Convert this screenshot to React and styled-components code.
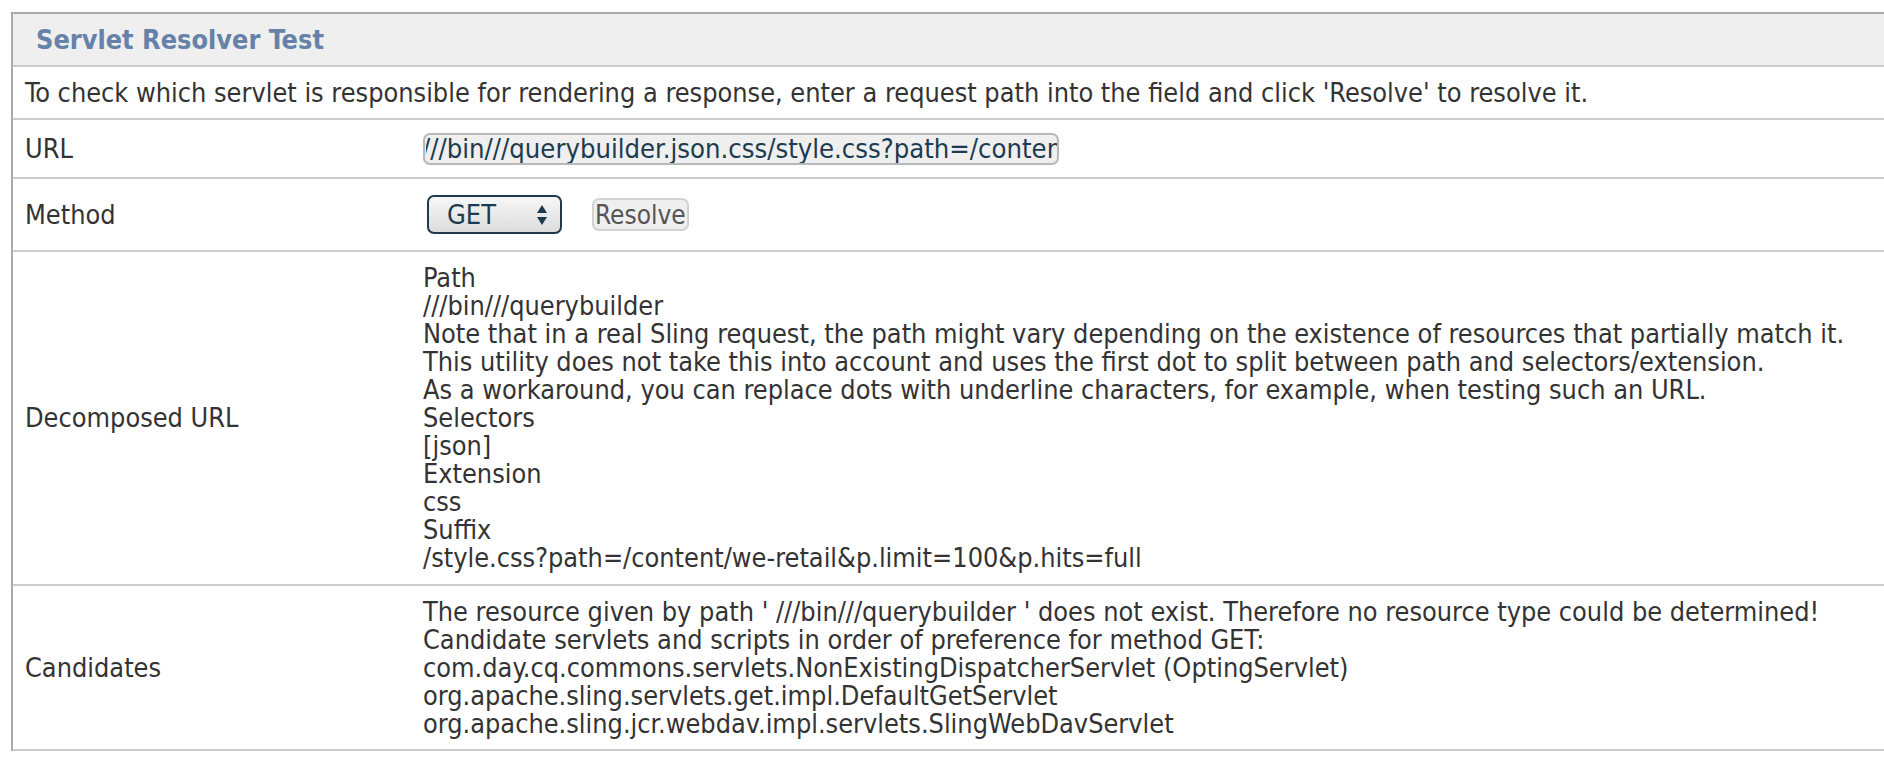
import React from 'react'
import styled, { createGlobalStyle } from 'styled-components'

const GlobalStyle = createGlobalStyle`
  html, body {
    margin: 0;
    padding: 0;
    background: #fff;
    overflow: hidden;
  }
  body {
    font-family: "DejaVu Sans Condensed", "DejaVu Sans", sans-serif;
    font-size: 26.85px;
    color: #333;
  }
`

const decomposed = [
  'Path',
  '///bin///querybuilder',
  'Note that in a real Sling request, the path might vary depending on the existence of resources that partially match it.',
  'This utility does not take this into account and uses the first dot to split between path and selectors/extension.',
  'As a workaround, you can replace dots with underline characters, for example, when testing such an URL.',
  'Selectors',
  '[json]',
  'Extension',
  'css',
  'Suffix',
  '/style.css?path=/content/we-retail&p.limit=100&p.hits=full',
]

const candidates = [
  "The resource given by path ' ///bin///querybuilder ' does not exist. Therefore no resource type could be determined!",
  'Candidate servlets and scripts in order of preference for method GET:',
  'com.day.cq.commons.servlets.NonExistingDispatcherServlet (OptingServlet)',
  'org.apache.sling.servlets.get.impl.DefaultGetServlet',
  'org.apache.sling.jcr.webdav.impl.servlets.SlingWebDavServlet',
]

function App() {
  return (
    <Page>
      <GlobalStyle />
      <Table>
        <Header>Servlet Resolver Test</Header>
        <Intro>
          To check which servlet is responsible for rendering a response, enter a request path into the field and click 'Resolve' to resolve it.
        </Intro>
        <Row>
          <Label>URL</Label>
          <Value $pad="12.5px">
            <UrlInput
              type="text"
              defaultValue="///bin///querybuilder.json.css/style.css?path=/content/we-retail&p.limit=100&p.hits=full"
            />
          </Value>
        </Row>
        <Row>
          <Label>Method</Label>
          <Value $pad="16px">
            <Controls>
              <SelectWrap>
                <MethodSelect defaultValue="GET">
                  <option>GET</option>
                  <option>POST</option>
                  <option>PUT</option>
                  <option>DELETE</option>
                </MethodSelect>
                <Arrows width="12" height="22" viewBox="0 0 12 22">
                  <path d="M6 1 L11 9 L1 9 Z" fill="#1f3a4d" />
                  <path d="M6 21 L11 13 L1 13 Z" fill="#1f3a4d" />
                </Arrows>
              </SelectWrap>
              <ResolveButton>Resolve</ResolveButton>
            </Controls>
          </Value>
        </Row>
        <Row>
          <Label>Decomposed URL</Label>
          <Value>
            {decomposed.map((line, i) => (
              <Line key={i}>{line}</Line>
            ))}
          </Value>
        </Row>
        <Row>
          <Label>Candidates</Label>
          <Value $pad="11.5px">
            {candidates.map((line, i) => (
              <Line key={i}>{line}</Line>
            ))}
          </Value>
        </Row>
      </Table>
    </Page>
  )
}

const Page = styled.div`
  padding: 12px 0 0 11px;
  width: 100vw;
  height: 100vh;
  box-sizing: border-box;
`

const Table = styled.div`
  border-top: 2px solid #aaa;
  border-left: 2px solid #aaa;
  width: 1900px;
`

const Header = styled.div`
  background: #efefef;
  border-bottom: 2px solid #ccc;
  height: 51px;
  display: flex;
  align-items: center;
  padding-left: 23px;
  font-weight: bold;
  color: #6682a8;
`

const Intro = styled.div`
  border-bottom: 2px solid #ccc;
  height: 51px;
  display: flex;
  align-items: center;
  padding-left: 12px;
  line-height: 28px;
`

const Row = styled.div`
  display: grid;
  grid-template-columns: 410px 1fr;
  align-items: center;
  border-bottom: 2px solid #ccc;
`

const Label = styled.div`
  padding-left: 12px;
  line-height: 28px;
`

const Value = styled.div`
  padding: ${(p) => p.$pad || '12px'} 0;
  line-height: 28px;
`

const Line = styled.div`
  white-space: nowrap;
`

const UrlInput = styled.input`
  display: block;
  box-sizing: border-box;
  width: 636px;
  height: 32px;
  padding: 0 0 0 1px;
  text-indent: -4px;
  font-family: inherit;
  font-size: 27.2px;
  color: #1d3b50;
  background: #efefef;
  border: 2px solid #b8b8b8;
  border-radius: 7px;
  outline: none;
`

const Controls = styled.div`
  display: flex;
  align-items: center;
  gap: 30px;
  padding-left: 4px;
`

const SelectWrap = styled.div`
  position: relative;
  width: 135px;
  height: 39px;
`

const MethodSelect = styled.select`
  appearance: none;
  box-sizing: border-box;
  width: 100%;
  height: 100%;
  padding: 0 0 0 18px;
  font-family: inherit;
  font-size: 27px;
  color: #1d3b50;
  background: linear-gradient(#f7f7f7, #dcdcdc);
  border: 2px solid #1f3a4d;
  border-radius: 7px;
  outline: none;
`

const Arrows = styled.svg`
  position: absolute;
  right: 14px;
  top: 9px;
  pointer-events: none;
`

const ResolveButton = styled.button`
  box-sizing: border-box;
  height: 33px;
  padding: 0 1px;
  font-family: inherit;
  font-size: 26px;
  color: #555;
  background: #efefef;
  border: 2px solid #d2d2d2;
  border-radius: 7px;
`

export default App
